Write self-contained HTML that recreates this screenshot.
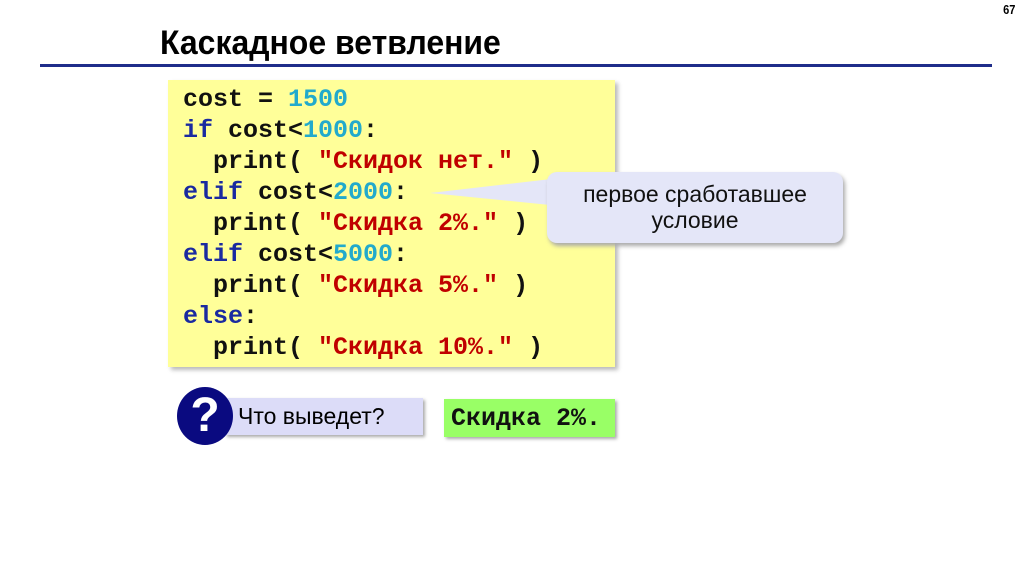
<!DOCTYPE html>
<html><head><meta charset="utf-8"><style>
body{margin:0;width:1024px;height:574px;background:#fff;position:relative;overflow:hidden;font-family:"Liberation Sans",sans-serif}
.abs{position:absolute}
.num{right:8px;top:2px;font-weight:bold;font-size:13px;transform:scaleX(.85)}
.title{left:160px;top:24px;font-size:34px;font-weight:bold;transform:scaleX(.94);transform-origin:left;white-space:nowrap}
.line{left:40px;top:64px;width:952px;height:3px;background:#1f2d8a}
.code{left:168px;top:80px;width:447px;height:287px;background:#ffff99;box-shadow:3px 3px 4px #bbb}
pre{margin:0;position:absolute;left:183px;top:84px;font-family:"Liberation Mono",monospace;font-weight:bold;font-size:25px;line-height:31px;color:#111}
.k{color:#1a2aa0}.n{color:#22aacc}.s{color:#c00000}
.call{left:547px;top:172px;width:296px;height:71px;background:#e4e6f8;border-radius:10px;box-shadow:2px 3px 4px #aaa;text-align:center;font-size:23px;line-height:26px;padding-top:9px;box-sizing:border-box;color:#111}
.q{left:225px;top:398px;width:198px;height:37px;background:#dcdcf8;box-shadow:2px 2px 3px #aaa;font-size:23px;line-height:37px;padding-left:13px;box-sizing:border-box}
.circ{left:177px;top:387px;width:56px;height:58px;border-radius:50%;background:#0a0a80;color:#fff;font-weight:bold;font-size:48px;text-align:center;line-height:58px}
.g{left:444px;top:399px;width:171px;height:38px;background:#99ff66;box-shadow:2px 2px 3px #aaa;font-family:"Liberation Mono",monospace;font-weight:bold;font-size:25px;line-height:40px;padding-left:7px;box-sizing:border-box;color:#111}
</style></head><body>
<div class="abs num">67</div>
<div class="abs title">Каскадное ветвление</div>
<div class="abs line"></div>
<div class="abs code"></div>
<pre>cost = <span class="n">1500</span>
<span class="k">if</span> cost&lt;<span class="n">1000</span>:
  print( <span class="s">"Скидок нет."</span> )
<span class="k">elif</span> cost&lt;<span class="n">2000</span>:
  print( <span class="s">"Скидка 2%."</span> )
<span class="k">elif</span> cost&lt;<span class="n">5000</span>:
  print( <span class="s">"Скидка 5%."</span> )
<span class="k">else</span>:
  print( <span class="s">"Скидка 10%."</span> )</pre>
<svg class="abs" style="left:0;top:0" width="1024" height="574"><polygon points="430,193 560,178 560,206" fill="#e4e6f8"/></svg>
<div class="abs call">первое сработавшее<br>условие</div>
<div class="abs q">Что выведет?</div>
<div class="abs circ">?</div>
<div class="abs g">Скидка 2%.</div>
</body></html>
